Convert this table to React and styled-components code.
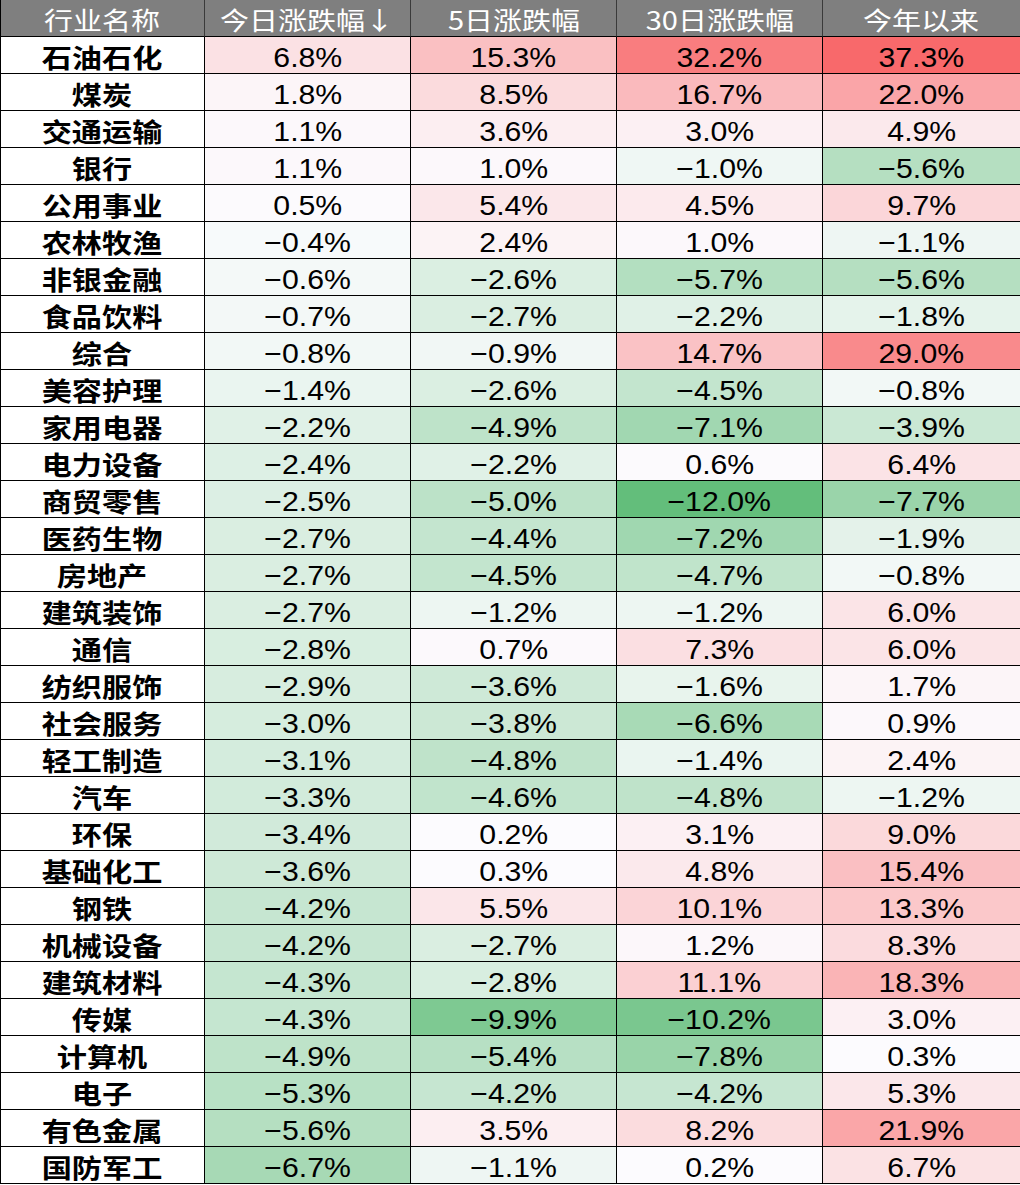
import React from "react";
import styled, { createGlobalStyle } from "styled-components";

const GlobalStyle = createGlobalStyle`
  html, body {
    margin: 0;
    padding: 0;
    background: #ffffff;
  }
`;

const Table = styled.div`
  width: 1020px;
  border-left: 1px solid #000;
  box-sizing: border-box;
  overflow: hidden;
`;

const Row = styled.div`
  display: grid;
  grid-template-columns: 204px 206px 206px 206px 1fr;
  height: 37px;
`;

const Cell = styled.div`
  box-sizing: border-box;
  height: 37px;
  border-right: 1px solid #000;
  border-bottom: 1px solid #000;
  display: flex;
  align-items: center;
  justify-content: center;
  background: ${(props) => props.$bg || "#ffffff"};
  &:last-child {
    border-right: none;
  }
`;

const HeadCell = styled(Cell)`
  background: #7f7f7f;
  border-right-color: #3a3a3a;
  padding-top: 2px;
`;

const Stretch = styled.span`
  display: inline-block;
  transform: scaleX(${(props) => props.$sx || 1.16});
  white-space: nowrap;
`;

const HeadText = styled(Stretch)`
  color: #ffffff;
  font-family: "Noto Sans CJK SC", "Liberation Sans", sans-serif;
  font-size: 25px;
  line-height: 30px;
`;

const NameText = styled(Stretch)`
  color: #000;
  font-family: "Noto Sans CJK SC", sans-serif;
  font-weight: 700;
  font-size: 26px;
  line-height: 30px;
  padding-top: 4px;
`;

const NumText = styled(Stretch)`
  color: #000;
  font-family: "Liberation Sans", Arial, sans-serif;
  font-size: 27px;
  line-height: 30px;
  padding-top: 5px;
`;

const headers = ["行业名称", "今日涨跌幅↓", "5日涨跌幅", "30日涨跌幅", "今年以来"];

const rows = [
  ["石油石化", 6.8, 15.3, 32.2, 37.3],
  ["煤炭", 1.8, 8.5, 16.7, 22.0],
  ["交通运输", 1.1, 3.6, 3.0, 4.9],
  ["银行", 1.1, 1.0, -1.0, -5.6],
  ["公用事业", 0.5, 5.4, 4.5, 9.7],
  ["农林牧渔", -0.4, 2.4, 1.0, -1.1],
  ["非银金融", -0.6, -2.6, -5.7, -5.6],
  ["食品饮料", -0.7, -2.7, -2.2, -1.8],
  ["综合", -0.8, -0.9, 14.7, 29.0],
  ["美容护理", -1.4, -2.6, -4.5, -0.8],
  ["家用电器", -2.2, -4.9, -7.1, -3.9],
  ["电力设备", -2.4, -2.2, 0.6, 6.4],
  ["商贸零售", -2.5, -5.0, -12.0, -7.7],
  ["医药生物", -2.7, -4.4, -7.2, -1.9],
  ["房地产", -2.7, -4.5, -4.7, -0.8],
  ["建筑装饰", -2.7, -1.2, -1.2, 6.0],
  ["通信", -2.8, 0.7, 7.3, 6.0],
  ["纺织服饰", -2.9, -3.6, -1.6, 1.7],
  ["社会服务", -3.0, -3.8, -6.6, 0.9],
  ["轻工制造", -3.1, -4.8, -1.4, 2.4],
  ["汽车", -3.3, -4.6, -4.8, -1.2],
  ["环保", -3.4, 0.2, 3.1, 9.0],
  ["基础化工", -3.6, 0.3, 4.8, 15.4],
  ["钢铁", -4.2, 5.5, 10.1, 13.3],
  ["机械设备", -4.2, -2.7, 1.2, 8.3],
  ["建筑材料", -4.3, -2.8, 11.1, 18.3],
  ["传媒", -4.3, -9.9, -10.2, 3.0],
  ["计算机", -4.9, -5.4, -7.8, 0.3],
  ["电子", -5.3, -4.2, -4.2, 5.3],
  ["有色金属", -5.6, 3.5, 8.2, 21.9],
  ["国防军工", -6.7, -1.1, 0.2, 6.7],
];

// excel style 3-colour scale over the whole table, midpoint 0
const allValues = rows.flatMap((r) => r.slice(1));
const minV = Math.min(...allValues);
const maxV = Math.max(...allValues);
const WHITE = [252, 252, 255];
const GREEN = [99, 190, 123];
const RED = [248, 105, 107];

function mix(a, b, t) {
  return a.map((c, i) => Math.round(c + (b[i] - c) * t));
}

function scaleColor(v) {
  const c = v >= 0 ? mix(WHITE, RED, v / maxV) : mix(WHITE, GREEN, v / minV);
  return `rgb(${c[0]}, ${c[1]}, ${c[2]})`;
}

function fmt(v) {
  const s = Math.abs(v).toFixed(1) + "%";
  return v < 0 ? "\u2212" + s : s;
}

const App = () => {
  return (
    <>
      <GlobalStyle />
      <Table>
        <Row>
          {headers.map((h) => (
            <HeadCell key={h}>
              <HeadText>{h}</HeadText>
            </HeadCell>
          ))}
        </Row>
        {rows.map(([name, ...vals]) => (
          <Row key={name}>
            <Cell>
              <NameText>{name}</NameText>
            </Cell>
            {vals.map((v, i) => (
              <Cell key={i} $bg={scaleColor(v)}>
                <NumText $sx={1.12}>{fmt(v)}</NumText>
              </Cell>
            ))}
          </Row>
        ))}
      </Table>
    </>
  );
};

export default App;
